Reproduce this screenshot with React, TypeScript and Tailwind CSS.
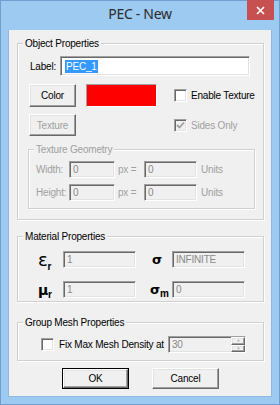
import React from 'react';

const sunken =
  'border border-t-[#a0a0a0] border-l-[#a0a0a0] border-r-white border-b-white shadow-[inset_1px_1px_0_#696969,inset_-1px_-1px_0_#e3e3e3]';
const raised =
  'border border-t-white border-l-white border-r-[#696969] border-b-[#696969] shadow-[inset_-1px_-1px_0_#a0a0a0,inset_1px_1px_0_#e3e3e3] bg-[#f0f0f0]';
const group =
  'border border-[#d0d0d0] shadow-[1px_1px_0_white,inset_1px_1px_0_white] m-0 p-0';
const legend = 'ml-[5px] px-[2px] leading-[13px] bg-[#f0f0f0]';

const Check = ({ checked, disabled }: { checked?: boolean; disabled?: boolean }) => (
  <span
    className={`${sunken} w-[13px] h-[13px] flex items-center justify-center ${
      disabled ? 'bg-[#f0f0f0]' : 'bg-white'
    }`}
  >
    {checked && (
      <svg width="9" height="9" viewBox="0 0 9 9">
        <polyline points="1,4 3.5,6.5 8,1.5" fill="none" stroke="#a0a0a0" strokeWidth="1.8" />
      </svg>
    )}
  </span>
);

const Field = ({ value, w }: { value: string; w: string }) => (
  <div className={`${sunken} ${w} h-[17px] flex items-center pl-[3px] text-[#8a8a8a] bg-[#f0f0f0]`}>
    {value}
  </div>
);

const Sym = ({ main, sub, mainSize }: { main: string; sub?: string; mainSize: string }) => (
  <span className="flex items-end text-black leading-none">
    <span className={`${mainSize} font-['DejaVu_Sans',sans-serif]`}>{main}</span>
    {sub && <span className="text-[10px] font-bold mb-[-3px] font-['Liberation_Sans',Arial,sans-serif]">{sub}</span>}
  </span>
);

export default function App() {
  return (
    <div className="w-[280px] h-[405px] bg-[#9ccaf0] border border-[#6f9fd2] font-['Liberation_Sans',Arial,sans-serif] text-[10px] tracking-[-0.2px] text-black flex flex-col">
      {/* title bar */}
      <div className="relative h-[29px] flex items-center justify-center">
        <span className="font-['Noto_Sans',sans-serif] text-[14px] tracking-[-0.3px] text-[#2b2b2b] mt-[-4px]">PEC - New</span>
        <div className="absolute top-[-1px] right-[5px] w-[27px] h-[20px] bg-[#c75050] flex items-center justify-center">
          <svg width="9" height="9" viewBox="0 0 9 9">
            <path d="M1 1 L8 8 M8 1 L1 8" stroke="white" strokeWidth="1.6" />
          </svg>
        </div>
      </div>

      {/* client area */}
      <div className="mx-[7px] h-[367px] bg-[#f0f0f0] border border-[#8fb8e2] border-t-0 pl-[8px] pr-[7px] pt-[7px] flex flex-col">
        {/* Object Properties */}
        <fieldset className={group}>
          <legend className={legend}>Object Properties</legend>
          <div className="pt-[6px] pl-[10px] pb-[10px] flex flex-col">
            <div className="flex items-center h-[20px] ml-[2px]">
              <span className="w-[30px]">Label:</span>
              <div className={`${sunken} bg-white w-[190px] h-[20px] flex items-center pl-[4px]`}>
                <span className="bg-[#3399ff] text-white leading-[13px] px-[1px]">PEC_1</span>
              </div>
            </div>
            <div className="flex items-center h-[23px] mt-[8px] ml-[1px]">
              <div className={`${raised} w-[47px] h-[23px] flex items-center justify-center`}>Color</div>
              <div className={`${sunken} w-[71px] h-[23px] ml-[10px] bg-[#f0f0f0]`}>
                <div className="w-full h-full bg-[#ff0000]" />
              </div>
              <div className="flex items-center ml-[17px] gap-[4px]">
                <Check />
                <span>Enable Texture</span>
              </div>
            </div>
            <div className="flex items-center h-[22px] mt-[7px] ml-[1px]">
              <div className={`${raised} w-[47px] h-[22px] flex items-center justify-center text-[#a0a0a0]`}>Texture</div>
              <div className="flex items-center ml-[98px] gap-[4px] text-[#a0a0a0]">
                <Check checked disabled />
                <span>Sides Only</span>
              </div>
            </div>
            <fieldset className={`${group} w-[227px] mt-[7px] text-[#a0a0a0]`}>
              <legend className={legend}>Texture Geometry</legend>
              <div className="pt-[5px] pl-[7px] pb-[7px] flex flex-col gap-[6px]">
                {['Width:', 'Height:'].map((l) => (
                  <div key={l} className="flex items-center h-[17px]">
                    <span className="w-[33px]">{l}</span>
                    <Field value="0" w="w-[46px]" />
                    <span className="ml-[3px] w-[26px]">px =</span>
                    <Field value="0" w="w-[53px]" />
                    <span className="ml-[4px]">Units</span>
                  </div>
                ))}
              </div>
            </fieldset>
          </div>
        </fieldset>

        {/* Material Properties */}
        <fieldset className={`${group} mt-[10px]`}>
          <legend className={legend}>Material Properties</legend>
          <div className="pt-[8px] pl-[20px] pb-[3px] flex flex-col gap-[13px]">
            <div className="flex items-center h-[17px]">
              <div className="w-[25px]">
                <Sym main="ε" sub="r" mainSize="text-[18px]" />
              </div>
              <Field value="1" w="w-[73px]" />
              <div className="w-[36px] pl-[16px] font-bold">
                <Sym main="σ" mainSize="text-[13px]" />
              </div>
              <Field value="INFINITE" w="w-[73px]" />
            </div>
            <div className="flex items-center h-[17px]">
              <div className="w-[25px] font-bold">
                <Sym main="μ" sub="r" mainSize="text-[14px]" />
              </div>
              <Field value="1" w="w-[73px]" />
              <div className="w-[36px] pl-[14px] font-bold">
                <Sym main="σ" sub="m" mainSize="text-[13px]" />
              </div>
              <Field value="0" w="w-[73px]" />
            </div>
          </div>
        </fieldset>

        {/* Group Mesh Properties */}
        <fieldset className={`${group} mt-[14px]`}>
          <legend className={legend}>Group Mesh Properties</legend>
          <div className="pt-[7px] pl-[23px] pb-[7px] flex items-center">
            <Check />
            <span className="ml-[5px] w-[109px]">Fix Max Mesh Density at</span>
            <div className={`${sunken} w-[78px] h-[17px] bg-[#f0f0f0] flex items-stretch text-[#8a8a8a]`}>
              <span className="flex-1 pl-[3px] flex items-center">30</span>
              <div className="w-[14px] flex flex-col">
                {['M2 4 L4 2 L6 4', 'M2 2 L4 4 L6 2'].map((d) => (
                  <div key={d} className={`${raised} flex-1 flex items-center justify-center`}>
                    <svg width="7" height="5" viewBox="0 0 8 6">
                      <path d={d} fill="#a0a0a0" />
                    </svg>
                  </div>
                ))}
              </div>
            </div>
          </div>
        </fieldset>

        {/* buttons */}
        <div className="flex justify-center gap-[23px] mt-[7px]">
          <div className="border border-black">
            <div className={`${raised} w-[65px] h-[19px] flex items-center justify-center`}>OK</div>
          </div>
          <div className={`${raised} w-[67px] h-[21px] flex items-center justify-center`}>Cancel</div>
        </div>
      </div>
    </div>
  );
}
